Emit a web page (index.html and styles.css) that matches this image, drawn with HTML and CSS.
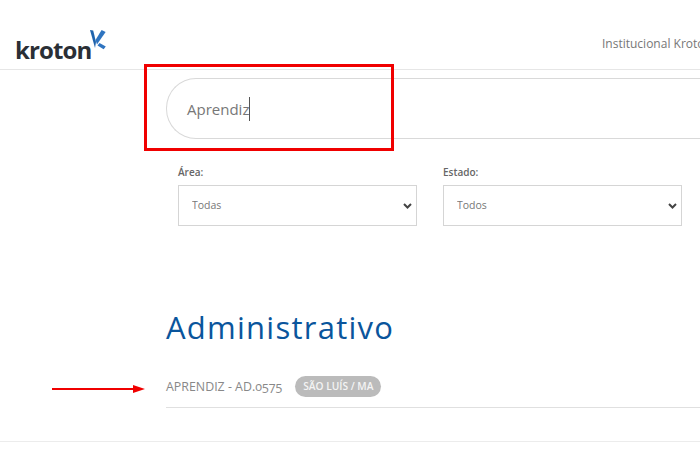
FILE: index.html
```html
<!DOCTYPE html>
<html lang="pt-BR">
<head>
    <meta charset="UTF-8">
    <meta name="viewport" content="width=device-width, initial-scale=1.0">
    <title>Kroton - Vagas</title>
    <link rel="stylesheet" href="styles.css">
</head>
<body>
    <header class="site-header">
        <a class="logo" href="#">
            <span class="logo-text">kroton</span>
            <svg class="logo-mark" width="16" height="20" viewBox="0 0 16 20">
                <path d="M0 0 L3.2 0.6 L6 12 L5 18 Z" fill="#1f63ad"/>
                <path d="M5.5 10 L11.6 0 L15.6 2 L7 14.5 Z" fill="#2f74c0"/>
                <path d="M7.5 15.5 L9.5 13 L15.8 16.6 L13.6 19.2 Z" fill="#2f74c0"/>
            </svg>
        </a>
        <nav class="site-nav">Institucional Kroton</nav>
    </header>

    <main class="content">
        <div class="search-box">
            <span class="search-text">Aprendiz</span><span class="caret"></span>
        </div>

        <div class="filters">
            <div class="filter">
                <label for="area">Área:</label>
                <select id="area"><option>Todas</option></select>
            </div>
            <div class="filter">
                <label for="estado">Estado:</label>
                <select id="estado"><option>Todos</option></select>
            </div>
        </div>

        <h1>Administrativo</h1>

        <div class="job-row">
            <span class="job-title">APRENDIZ - AD.0575</span>
            <span class="job-place">SÃO LUÍS / MA</span>
        </div>
    </main>

    <footer class="site-footer"></footer>

    <!-- marcacoes em vermelho sobre o print -->
    <div class="mark-box"></div>
    <svg class="mark-arrow" width="94" height="10" viewBox="0 0 94 10">
        <path d="M0 5 H82" stroke="#f00000" stroke-width="2"/>
        <path d="M81 1 L93 5 L81 9 Z" fill="#f00000"/>
    </svg>
</body>
</html>
```

FILE: styles.css
```css
html, body {
    height: 100%;
}
body {
    margin: 0;
    width: 700px;
    overflow: hidden;
    background-color: #fff;
    font-family: "Open Sans", Arial, sans-serif;
    color: #777;
    position: relative;
}
.site-header {
    height: 69px;
    border-bottom: 1px solid #e6e6e6;
    display: flex;
    justify-content: space-between;
    padding-left: 15px;
    white-space: nowrap;
}
.logo {
    display: flex;
    align-items: flex-start;
    padding-top: 30px;
    text-decoration: none;
}
.logo-text {
    font-family: "Open Sans", Arial, sans-serif;
    font-size: 24px;
    font-weight: 700;
    line-height: 40px;
    letter-spacing: -0.9px;
    color: #2a2f36;
}
.logo-mark {
    margin-left: -1px;
}
.site-nav {
    font-size: 12px;
    line-height: 16px;
    padding-top: 36px;
    width: 98px;
    overflow: hidden;
    color: #777;
}
.content {
    margin-left: 166px;
    width: 800px;
    padding-top: 8px;
}
.search-box {
    height: 59px;
    border: 1px solid #d9d9d9;
    border-right: none;
    border-radius: 30px 0 0 30px;
    padding-left: 20px;
    display: flex;
    align-items: center;
}
.search-text {
    font-size: 15px;
    color: #777;
}
.caret {
    width: 1px;
    height: 24px;
    background-color: #555;
}
.filters {
    display: flex;
    gap: 26px;
    margin: 26px 0 0 12px;
}
.filter {
    display: flex;
    flex-direction: column;
    width: 239px;
}
.filter label {
    font-size: 10px;
    font-weight: 600;
    line-height: 14px;
    margin-bottom: 6px;
    color: #666;
}
.filter select {
    appearance: none;
    height: 41px;
    padding: 0 13px 2px;
    background: #fff url("data:image/svg+xml,%3Csvg xmlns='http://www.w3.org/2000/svg' width='9' height='6'%3E%3Cpath d='M1 1 L4.5 4.5 L8 1' fill='none' stroke='%23444' stroke-width='2'/%3E%3C/svg%3E") no-repeat right 4px center;
    border: 1px solid #d5d5d5;
    border-radius: 0;
    font-family: "Open Sans", Arial, sans-serif;
    font-size: 10.5px;
    color: #777;
}
h1 {
    margin: 79px 0 0;
    font-size: 31px;
    font-weight: 400;
    line-height: 44px;
    letter-spacing: 1.25px;
    color: #0a559c;
}
.job-row {
    display: flex;
    align-items: center;
    gap: 13px;
    height: 41px;
    margin-top: 17px;
    border-bottom: 1px solid #e0e0e0;
}
.job-title {
    font-size: 12.4px;
    font-variant-numeric: oldstyle-nums;
    color: #888;
}
.job-place {
    background-color: #bbb;
    color: #f4f4f4;
    font-size: 10.2px;
    font-weight: 600;
    line-height: 21px;
    padding: 0 8px;
    border-radius: 11px;
}
.site-footer {
    margin-top: 33px;
    border-top: 1px solid #ececec;
}
.mark-box {
    position: absolute;
    left: 144px;
    top: 64px;
    width: 244px;
    height: 81px;
    border: 3px solid #f00000;
}
.mark-arrow {
    position: absolute;
    left: 52px;
    top: 384px;
}
```
